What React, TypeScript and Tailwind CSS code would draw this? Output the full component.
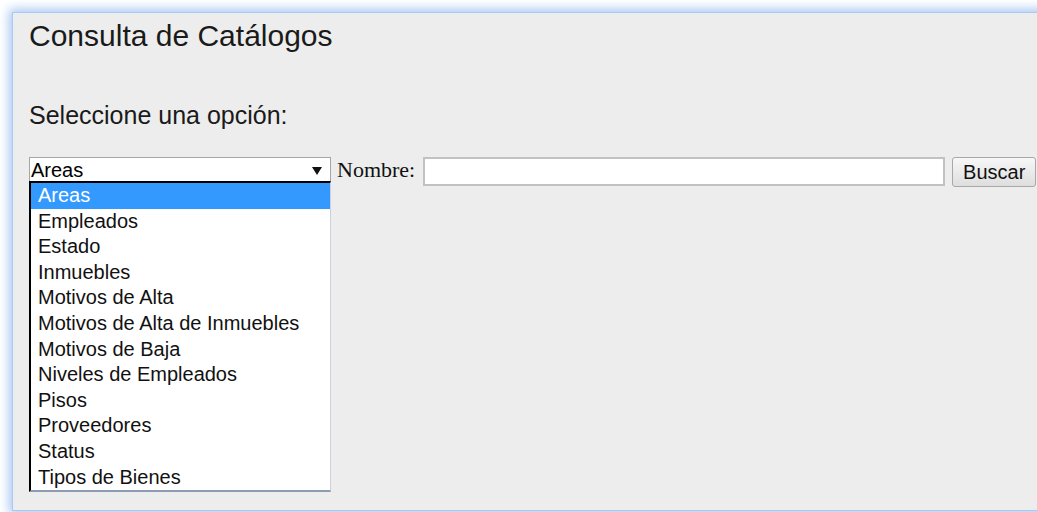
const opciones = [
  'Areas',
  'Empleados',
  'Estado',
  'Inmuebles',
  'Motivos de Alta',
  'Motivos de Alta de Inmuebles',
  'Motivos de Baja',
  'Niveles de Empleados',
  'Pisos',
  'Proveedores',
  'Status',
  'Tipos de Bienes',
];

const sans = "font-['Liberation_Sans',Arial,sans-serif]";

export default function App() {
  const seleccionada = 'Areas';

  return (
    <div className="h-[512px] w-[1037px] overflow-hidden bg-white pl-[12px] pt-[12px]">
      {/* ventana con el borde azul */}
      <div className="h-[499px] w-[1040px] border-t border-l border-b border-[#a9c8f2] bg-[#ededed] shadow-[0_0_10px_3px_#a9c8f2]">
        <div className={`${sans} pl-[16px] text-[#1a1a1a]`}>
          <h1 className="mt-[8px] text-[30px] leading-none font-normal">Consulta de Catálogos</h1>
          <p className="mt-[52px] text-[25px] leading-none">Seleccione una opción:</p>

          <div className="mt-[29px] flex items-start">
            {/* combo de catálogos abierto */}
            <div className="w-[302px]">
              <div className="flex h-[24px] items-center justify-between border border-b-0 border-[#a6a6a6] bg-white pl-[1px] pr-[8px]">
                <span className="text-[20px] leading-none text-black">{seleccionada}</span>
                <svg width="10" height="8" viewBox="0 0 10 8" className="mt-[2px]">
                  <path d="M0 0h10L5 8z" fill="#111" />
                </svg>
              </div>
              <ul className="border-t-2 border-l-2 border-b-2 border-r border-t-black border-l-black border-b-[#8d9bb3] border-r-[#c9d1de] bg-white">
                {opciones.map((op) => (
                  <li
                    key={op}
                    className={`h-[25.6px] pl-[7px] text-[20px] leading-[25px] ${
                      op === seleccionada ? 'bg-[#3399ff] text-white' : 'text-[#111]'
                    }`}
                  >
                    {op}
                  </li>
                ))}
              </ul>
            </div>

            <label className="ml-[6px] mt-[1px] font-['Liberation_Serif','Times_New_Roman',serif] text-[22px] leading-[24px] text-[#111]">
              Nombre:
            </label>
            <input
              type="text"
              className="ml-[8px] h-[29px] w-[522px] border-2 border-[#c2c2c2] bg-white outline-none"
            />
            <button className="ml-[7px] h-[30px] w-[84px] rounded-[3px] border border-[#a8a8a8] bg-gradient-to-b from-[#f7f7f7] to-[#dedede] text-[20px] leading-none text-[#111]">
              Buscar
            </button>
          </div>
        </div>
      </div>
    </div>
  );
}
